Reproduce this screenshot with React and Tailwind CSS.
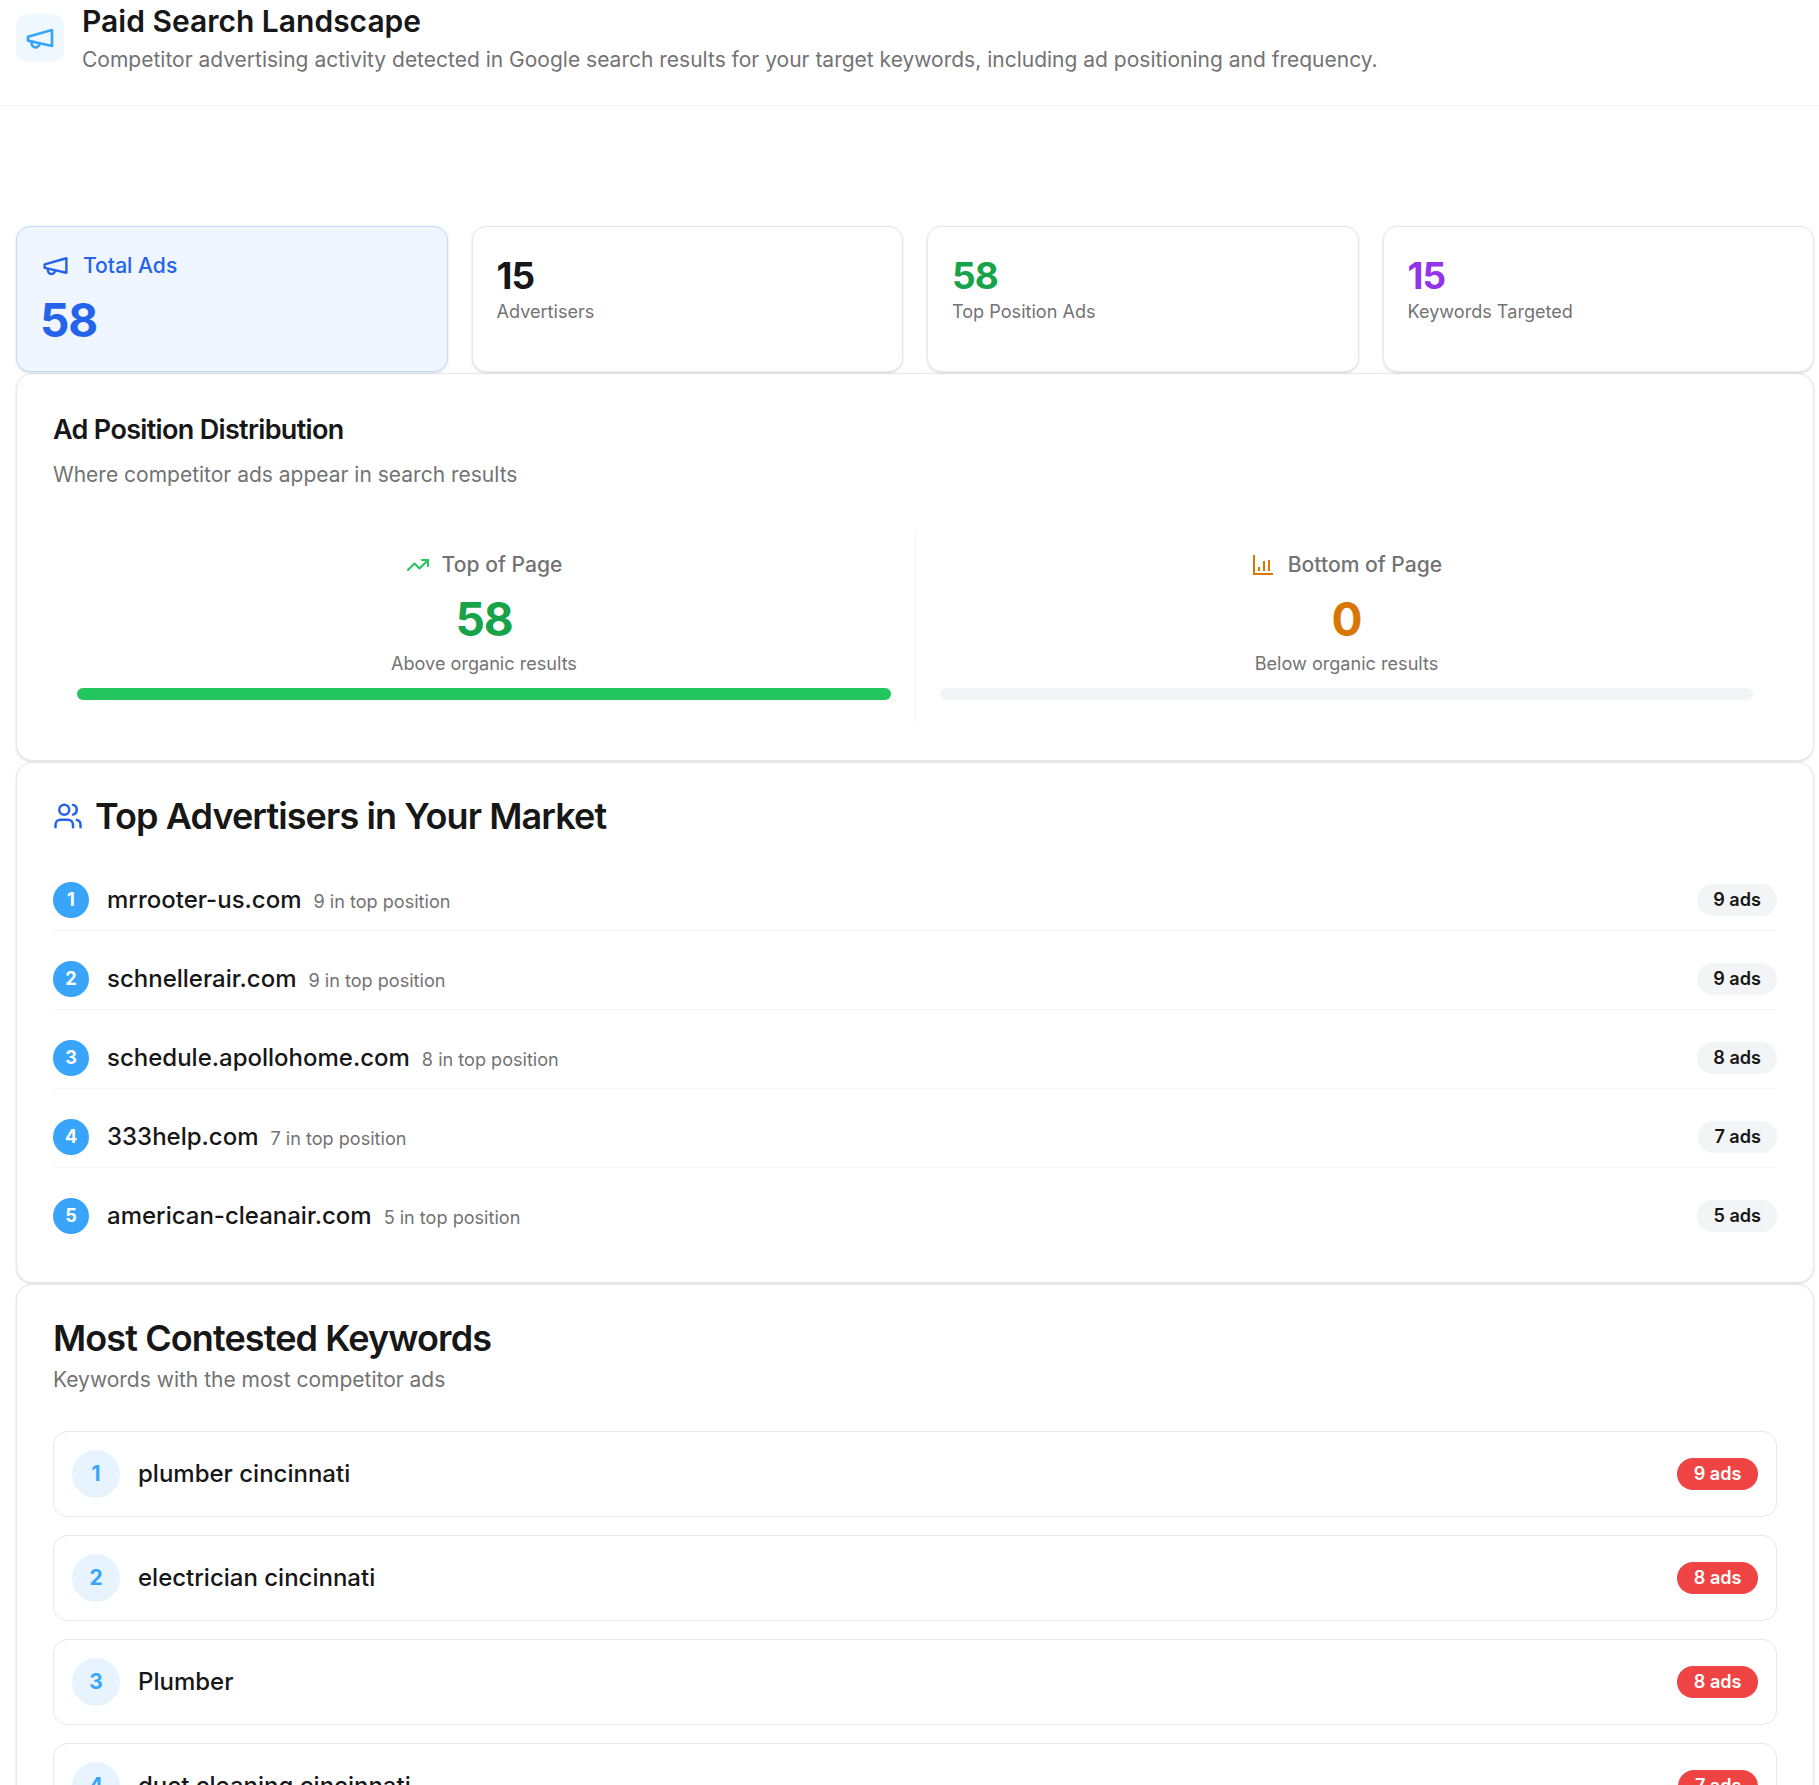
import React from "react";
import { TrendingUp, Users } from "lucide-react";

const MegaIcon = ({ size, className }) => (
  <svg viewBox="0 0 24 24" width={size} height={size} fill="none" stroke="currentColor" strokeWidth="2" strokeLinecap="round" strokeLinejoin="round" className={className}>
    <path d="m3 11 18-5v12L3 14v-3z" />
    <path d="M11.6 16.8a3 3 0 1 1-5.8-1.6" />
  </svg>
);

const BarIcon = ({ className }) => (
  <svg viewBox="0 0 24 24" fill="none" stroke="currentColor" strokeWidth="2" className={className}>
    <path d="M3 2v19h19" />
    <path d="M8 18v-4" />
    <path d="M13 18V8" />
    <path d="M18 18V7" />
  </svg>
);

const advertisers = [
  ["mrrooter-us.com", "9 in top position", "9 ads"],
  ["schnellerair.com", "9 in top position", "9 ads"],
  ["schedule.apollohome.com", "8 in top position", "8 ads"],
  ["333help.com", "7 in top position", "7 ads"],
  ["american-cleanair.com", "5 in top position", "5 ads"],
];

const keywords = [
  ["plumber cincinnati", "9 ads"],
  ["electrician cincinnati", "8 ads"],
  ["Plumber", "8 ads"],
  ["duct cleaning cincinnati", "7 ads"],
];

function StatCard({ value, label, color }) {
  return (
    <div className="h-[146px] rounded-[14px] border border-[#e5e7eb] bg-white px-6 pt-[27px] shadow-sm">
      <div className={`text-[37px] font-bold leading-[44px] tracking-tight ${color}`}>{value}</div>
      <div className="-mt-px text-[18.1px] leading-[28px] text-[#737373]">{label}</div>
    </div>
  );
}

function PositionColumn({ icon, label, value, valueColor, sub, barColor, divider }) {
  return (
    <div className={`px-6 pt-[21px] pb-[23px] text-center ${divider ? "border-r border-[#f3f4f6]" : ""}`}>
      <div className="flex items-center justify-center gap-[13px] text-[21.1px] font-medium leading-[28px] text-[#737373]">
        {icon}
        <span>{label}</span>
      </div>
      <div className={`mt-[12px] text-[46px] font-bold leading-[56px] tracking-tight ${valueColor}`}>{value}</div>
      <div className="mt-[4px] text-[18.1px] leading-[24px] text-[#737373]">{sub}</div>
      <div className="mt-[13px] h-3 rounded-full bg-[#f3f4f6]">
        <div className={`h-3 rounded-full ${barColor}`} />
      </div>
    </div>
  );
}

export default function App() {
  return (
    <div className="h-[1785px] overflow-hidden bg-white font-['Inter',sans-serif] text-[#171717]">
      <header className="flex h-[106px] items-start gap-[18px] border-b border-[#f3f4f6] px-4 pt-[3px]">
        <div className="mt-[11px] flex h-12 w-12 shrink-0 items-center justify-center rounded-xl bg-[#f0f8ff] text-[#38a5fb]">
          <MegaIcon size={32} />
        </div>
        <div>
          <h1 className="text-[30px] font-semibold leading-[36px]">Paid Search Landscape</h1>
          <p className="mt-[3px] text-[21px] leading-[36px] text-[#737373]">
            Competitor advertising activity detected in Google search results for your target keywords, including ad positioning and frequency.
          </p>
        </div>
      </header>

      <main className="pl-4 pr-[5px] pt-[120px]">
        <div className="grid grid-cols-4 gap-6">
          <div className="h-[146px] rounded-[14px] border border-[#bfdbfe] bg-[#eff6ff] px-6 pt-[24px] shadow-sm">
            <div className="flex items-center gap-[13px] text-[21.1px] font-medium leading-[28px] text-[#2563eb]">
              <MegaIcon size={29} />
              <span>Total Ads</span>
            </div>
            <div className="-ml-px mt-[11px] text-[46px] font-bold leading-[58px] tracking-tight text-[#2563eb]">58</div>
          </div>
          <StatCard value="15" label="Advertisers" color="text-[#171717]" />
          <StatCard value="58" label="Top Position Ads" color="text-[#16a34a]" />
          <StatCard value="15" label="Keywords Targeted" color="text-[#9333ea]" />
        </div>

        <section className="mt-px rounded-[16px] border border-[#e5e7eb] bg-white px-9 pt-[38px] pb-[37px] shadow-sm">
          <h2 className="text-[27px] font-semibold leading-[36px] tracking-tight">Ad Position Distribution</h2>
          <p className="mt-[13px] text-[21px] leading-[28px] text-[#737373]">Where competitor ads appear in search results</p>
          <div className="mt-[41px] grid grid-cols-[863px_1fr]">
            <PositionColumn
              divider
              icon={<TrendingUp size={24} className="-mr-[1px] text-[#22c55e]" />}
              label="Top of Page"
              value="58"
              valueColor="text-[#16a34a]"
              sub="Above organic results"
              barColor="w-full bg-[#22c55e]"
            />
            <PositionColumn
              icon={<BarIcon className="h-6 w-6 text-[#d97706]" />}
              label="Bottom of Page"
              value="0"
              valueColor="text-[#d97706]"
              sub="Below organic results"
              barColor="w-0 bg-[#f59e0b]"
            />
          </div>
        </section>

        <section className="mt-px rounded-[16px] border border-[#e5e7eb] bg-white px-9 pt-[31px] pb-9 shadow-sm">
          <div className="flex items-center gap-[12px]">
            <Users size={30} className="text-[#2563eb]" />
            <h2 className="text-[36px] font-semibold leading-[44px] tracking-tight">Top Advertisers in Your Market</h2>
          </div>
          <div className="mt-[32px] flex flex-col gap-[18px]">
            {advertisers.map(([domain, sub, ads], i) => (
              <div key={domain} className={`flex items-center justify-between py-3 ${i < advertisers.length - 1 ? "border-b border-[#f3f4f6]" : ""}`}>
                <div className="flex items-center">
                  <div className="flex h-9 w-9 items-center justify-center rounded-full bg-[#38a5fb] text-[18.1px] font-bold text-white">{i + 1}</div>
                  <span className="ml-[18px] text-[24px] font-medium leading-8">{domain}</span>
                  <span className="ml-3 mt-[2px] text-[18.1px] leading-7 text-[#737373]">{sub}</span>
                </div>
                <div className="flex h-8 items-center rounded-full bg-[#f3f4f6] px-4 text-[18.1px] font-semibold">{ads}</div>
              </div>
            ))}
          </div>
        </section>

        <section className="mt-px rounded-[16px] border border-[#e5e7eb] bg-white px-9 pt-[31px] shadow-sm">
          <h2 className="text-[36px] font-semibold leading-[44px] tracking-tight">Most Contested Keywords</h2>
          <p className="mt-[6px] text-[21px] leading-[28px] text-[#737373]">Keywords with the most competitor ads</p>
          <div className="mt-[37px] flex flex-col gap-[18px]">
            {keywords.map(([kw, ads], i) => (
              <div key={kw} className="flex h-[86px] items-center justify-between rounded-[14px] border border-[#e5e7eb] px-[18px]">
                <div className="flex items-center">
                  <div className="flex h-12 w-12 items-center justify-center rounded-full bg-[#e7f4ff] text-[21px] font-bold text-[#38a5fb]">{i + 1}</div>
                  <span className="ml-[18px] text-[24px] font-medium leading-8">{kw}</span>
                </div>
                <div className="flex h-8 items-center rounded-full bg-[#ef4444] px-[16.5px] text-[18.1px] font-semibold text-white">{ads}</div>
              </div>
            ))}
          </div>
        </section>
      </main>
    </div>
  );
}
